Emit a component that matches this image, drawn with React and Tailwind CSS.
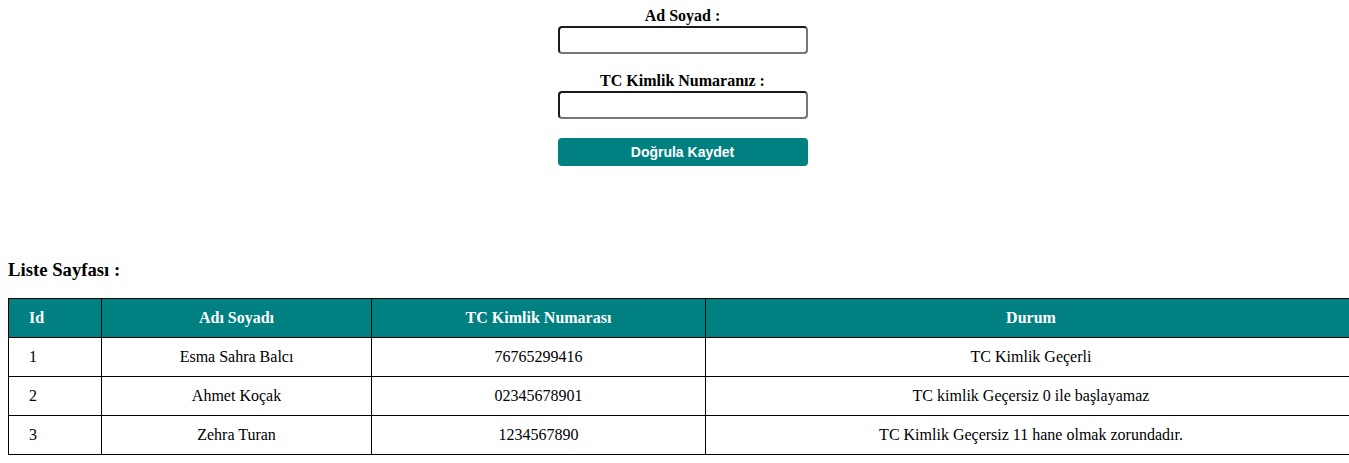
import React from "react";

const rows = [
  { id: 1, name: "Esma Sahra Balcı", tc: "76765299416", durum: "TC Kimlik Geçerli" },
  { id: 2, name: "Ahmet Koçak", tc: "02345678901", durum: "TC kimlik Geçersiz 0 ile başlayamaz" },
  { id: 3, name: "Zehra Turan", tc: "1234567890", durum: "TC Kimlik Geçersiz 11 hane olmak zorundadır." },
];

const inputCls =
  "block w-[250px] h-[28px] rounded-[4px] border-2 border-t-[#1a1a1a] border-l-[#1a1a1a] border-b-[#767676] border-r-[#767676] bg-white outline-none";

export default function App() {
  return (
    <div className="w-[1349px] h-[463px] overflow-hidden bg-white text-black font-['Liberation_Serif',serif]">
      <div className="flex flex-col items-center pt-[7px] pl-[16px]">
        <label className="block text-[16px] font-bold leading-[18px] mb-[1px]">Ad Soyad :</label>
        <input className={inputCls} />
        <label className="block text-[16px] font-bold leading-[18px] mt-[18px] mb-[1px]">TC Kimlik Numaranız :</label>
        <input className={inputCls} />
        <button className="mt-[19px] w-[250px] h-[28px] rounded-[4px] bg-[#008080] text-white text-[14px] font-bold font-['Liberation_Sans',sans-serif]">
          Doğrula Kaydet
        </button>
      </div>
      <h3 className="ml-[8px] mt-[93px] text-[18.72px] font-bold leading-[22px]">Liste Sayfası :</h3>
      <table className="ml-[8px] mt-[17px] w-[1349px] border-collapse table-fixed text-[16px]">
        <colgroup>
          <col className="w-[93px]" />
          <col className="w-[270px]" />
          <col className="w-[334px]" />
          <col />
        </colgroup>
        <thead>
          <tr className="bg-[#008080] text-white">
            <th className="border border-black h-[39px] text-left pl-[20px] font-bold">Id</th>
            <th className="border border-black h-[39px] text-center font-bold">Adı Soyadı</th>
            <th className="border border-black h-[39px] text-center font-bold">TC Kimlik Numarası</th>
            <th className="border border-black h-[39px] text-center font-bold">Durum</th>
          </tr>
        </thead>
        <tbody>
          {rows.map((r) => (
            <tr key={r.id}>
              <td className="border border-black h-[39px] text-left pl-[20px]">{r.id}</td>
              <td className="border border-black h-[39px] text-center">{r.name}</td>
              <td className="border border-black h-[39px] text-center">{r.tc}</td>
              <td className="border border-black h-[39px] text-center">{r.durum}</td>
            </tr>
          ))}
        </tbody>
      </table>
    </div>
  );
}
